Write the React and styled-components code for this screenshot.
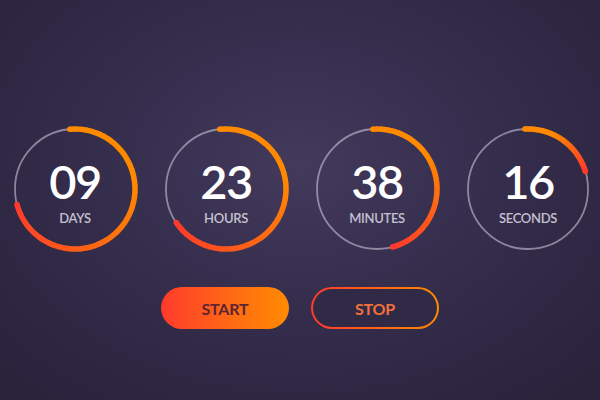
import React from "react";
import styled, {createGlobalStyle} from "styled-components";

const GlobalStyle = createGlobalStyle`
  html, body {
    margin: 0;
    padding: 0;
    width: 600px;
    height: 400px;
    overflow: hidden;
    font-family: Lato, "Open Sans", sans-serif;
  }
`;

const Page = styled.div`
  width: 600px;
  height: 400px;
  box-sizing: border-box;
  padding-top: 125px;
  display: flex;
  flex-direction: column;
  align-items: center;
  background: radial-gradient(ellipse 440px 320px at 300px 165px, #433a5c 0%, #352d4c 45%, #28223a 100%);
`;

const Row = styled.div`
  display: flex;
  justify-content: center;
  gap: 23px;
  padding-left: 3px;
`;

const Dial = styled.div`
  display: grid;
  width: 128px;
  height: 128px;
  & > * {
    grid-area: 1 / 1;
  }
`;

const Center = styled.div`
  display: flex;
  flex-direction: column;
  align-items: center;
  justify-content: center;
`;

const Value = styled.div`
  color: #ffffff;
  font-size: 47px;
  font-weight: 600;
  letter-spacing: -1.5px;
  line-height: 57px;
`;

const Label = styled.div`
  color: #c4c0d0;
  font-size: 13px;
  font-weight: 600;
  letter-spacing: -0.3px;
  line-height: 16px;
  text-transform: uppercase;
`;

const Buttons = styled.div`
  display: flex;
  gap: 22px;
  margin-top: 34px;
`;

const Button = styled.button`
  width: 128px;
  height: 42px;
  border-radius: 21px;
  font-family: Lato, sans-serif;
  font-size: 16px;
  font-weight: 700;
  letter-spacing: -0.2px;
  cursor: pointer;
  border: 2px solid transparent;
  color: ${p => (p.$filled ? "#5e2431" : "#f2703c")};
  background: ${p =>
    p.$filled
      ? "linear-gradient(90deg, #ff3a2c 0%, #ff6a14 55%, #ff8b00 100%) border-box"
      : "linear-gradient(#302a46, #302a46) padding-box, linear-gradient(90deg, #ff3a2c, #ff8b00) border-box"};
`;

const lerp = (a, b, t) => Math.round(a + (b - a) * t);
const mix = t => {
  const from = [255, 138, 0];
  const to = [255, 58, 44];
  const k = Math.max(0, Math.min(1, (t - 0.35) / 0.65));
  return `rgb(${lerp(from[0], to[0], k)},${lerp(from[1], to[1], k)},${lerp(from[2], to[2], k)})`;
};

const point = (deg, r) => {
  const a = ((deg - 90) * Math.PI) / 180;
  return [64 + r * Math.cos(a), 64 + r * Math.sin(a)];
};

function Ring({start, end}) {
  const r = 60;
  const n = 48;
  const step = (end - start) / n;
  const segs = [];
  for (let i = 0; i < n; i++) {
    const a0 = start + step * i;
    const a1 = Math.min(end, a0 + step + 0.6);
    const [x0, y0] = point(a0, r);
    const [x1, y1] = point(a1, r);
    segs.push(
      <path
        key={i}
        d={`M${x0} ${y0} A${r} ${r} 0 0 1 ${x1} ${y1}`}
        stroke={mix((i + 0.5) / n)}
        strokeWidth="5.5"
        fill="none"
      />
    );
  }
  const [sx, sy] = point(start, r);
  const [ex, ey] = point(end, r);
  return (
    <svg width="128" height="128" viewBox="0 0 128 128">
      <circle cx="64" cy="64" r={r} fill="none" stroke="rgba(200,196,215,0.6)" strokeWidth="1.8" />
      {segs}
      <circle cx={sx} cy={sy} r="2.75" fill={mix(0)} />
      <circle cx={ex} cy={ey} r="2.75" fill={mix(1)} />
    </svg>
  );
}

const units = [
  {value: "09", label: "Days", start: -5, end: 255},
  {value: "23", label: "Hours", start: -6, end: 236},
  {value: "38", label: "Minutes", start: -4, end: 165},
  {value: "16", label: "Seconds", start: -3, end: 73},
];

const App = () => {
  return (
    <Page>
      <GlobalStyle />
      <Row>
        {units.map(u => (
          <Dial key={u.label}>
            <Ring start={u.start} end={u.end} />
            <Center>
              <Value>{u.value}</Value>
              <Label>{u.label}</Label>
            </Center>
          </Dial>
        ))}
      </Row>
      <Buttons>
        <Button $filled>START</Button>
        <Button>STOP</Button>
      </Buttons>
    </Page>
  );
};

export default App;
